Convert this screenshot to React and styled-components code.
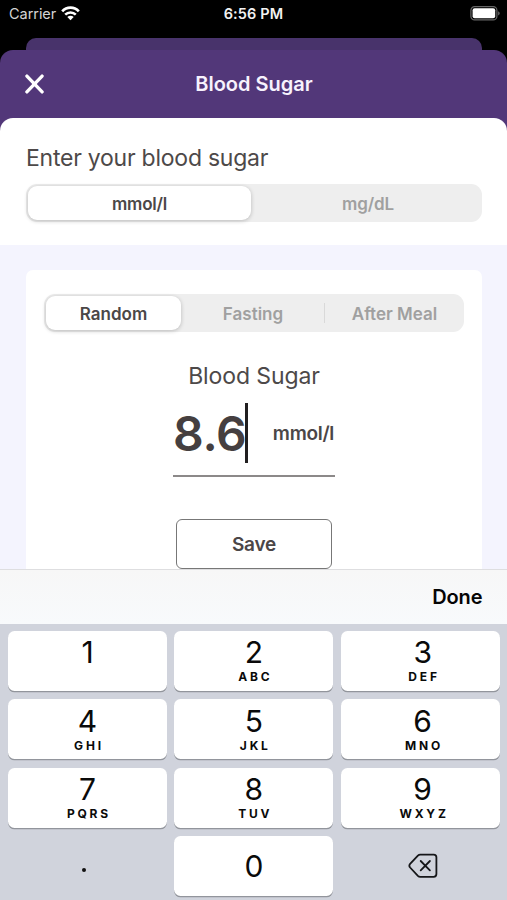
import React from 'react';
import styled, { createGlobalStyle } from 'styled-components';

const GlobalStyle = createGlobalStyle`
  * { box-sizing: border-box; }
  body { margin: 0; background: #000; font-family: Inter, "Liberation Sans", sans-serif; }
  button { font: inherit; color: inherit; border: 0; padding: 0; background: none; }
`;

const Screen = styled.div`
  width: 507px;
  height: 900px;
  overflow: hidden;
  display: flex;
  flex-direction: column;
  background: #000;
`;

const StatusBar = styled.div`
  flex: none;
  height: 38px;
  padding: 0 7px 11px 9px;
  display: grid;
  grid-template-columns: 1fr auto 1fr;
  align-items: center;
  color: #fff;
`;

const Carrier = styled.div`
  display: flex;
  align-items: center;
  gap: 5px;
  font-size: 14.5px;
  letter-spacing: -0.05px;
  color: #d4d4d4;
`;

const Clock = styled.div`
  padding-right: 2px;
  font-size: 14.5px;
  font-weight: 600;
  letter-spacing: 0.15px;
  color: #f2f2f2;
`;

const Battery = styled.svg`
  justify-self: end;
`;

const PreviousSheet = styled.div`
  flex: none;
  height: 12px;
  margin: 0 25px 0 26px;
  border-radius: 10px 10px 0 0;
  background: #48336b;
`;

const Sheet = styled.div`
  flex: none;
  height: 519px;
  overflow: hidden;
  border-radius: 13px 13px 0 0;
  background: #523779;
`;

const SheetHeader = styled.header`
  height: 68px;
  padding: 0 24px;
  display: grid;
  grid-template-columns: 40px 1fr 40px;
  align-items: center;
`;

const CloseButton = styled.button`
  display: flex;
`;

const SheetTitle = styled.h1`
  margin: 0;
  padding-left: 1px;
  text-align: center;
  font-size: 20px;
  font-weight: 600;
  color: #f7f2fd;
`;

const UnitPanel = styled.section`
  height: 127px;
  padding: 25px 25px 0 26px;
  border-radius: 13px 13px 0 0;
  background: #fff;
`;

const Prompt = styled.h2`
  margin: 0 0 11px;
  height: 30px;
  line-height: 30px;
  font-size: 23px;
  font-weight: 400;
  letter-spacing: -0.24px;
  color: #4d4949;
  white-space: nowrap;
`;

const Segments = styled.div`
  display: grid;
  grid-template-columns: ${(p) => p.$columns};
  height: 38px;
  padding: 2px;
  border-radius: 11px;
  background: #eeeeee;
`;

const Segment = styled.button`
  display: flex;
  align-items: center;
  justify-content: center;
  padding-left: ${(p) => p.$inset || '0'};
  padding-top: 1px;
  border-radius: 9px;
  font-size: 17px;
  font-weight: 600;
  letter-spacing: ${(p) => p.$tracking || '0'};
  color: ${(p) => (p.$active ? '#4b4747' : '#a0a0a0')};
  background: ${(p) => (p.$active ? '#fff' : 'transparent')};
  box-shadow: ${(p) => (p.$active ? '0 1px 4px rgba(0, 0, 0, 0.22)' : 'none')};
`;

const DividedSegment = styled(Segment)`
  border-radius: 0;
  background: linear-gradient(#d9d9d9, #d9d9d9) right center / 1px 20px no-repeat;
`;

const Content = styled.section`
  height: 324px;
  padding: 25px 25px 0 26px;
  background: #f4f4fe;
`;

const EntryCard = styled.div`
  height: 299px;
  padding: 24px 18px 0;
  border-radius: 7px 7px 0 0;
  background: #fff;
  display: flex;
  flex-direction: column;
`;

const EntryLabel = styled.h3`
  margin: 30px 0 0;
  height: 29px;
  line-height: 29px;
  text-align: center;
  font-size: 23px;
  font-weight: 400;
  letter-spacing: -0.1px;
  color: #4d4949;
`;

const ValueField = styled.div`
  align-self: center;
  width: 162px;
  height: 86px;
  border-bottom: 2px solid #8c8989;
  display: flex;
  align-items: center;
`;

const Value = styled.span`
  font-size: 48px;
  font-weight: 600;
  line-height: 60px;
  padding-top: 2px;
  letter-spacing: -0.3px;
  color: #453f40;
`;

const Caret = styled.span`
  flex: none;
  width: 3px;
  height: 60px;
  margin-left: -1px;
  background: #211f20;
`;

const ValueUnit = styled.span`
  margin-left: auto;
  padding-right: 1px;
  font-size: 19px;
  font-weight: 600;
  letter-spacing: -0.3px;
  color: #4b4647;
`;

const SaveButton = styled.button`
  align-self: center;
  flex: none;
  margin-top: 42px;
  width: 156px;
  height: 50px;
  border: 1.5px solid #777;
  border-radius: 6px;
  background: #fff;
  font-size: 19px;
  font-weight: 600;
  letter-spacing: -0.2px;
  color: #4b4647;
`;

const Toolbar = styled.div`
  flex: none;
  height: 55px;
  padding-right: 24.5px;
  border-top: 1px solid #dedee0;
  background: linear-gradient(#f7f7f7, #f8fafc);
  display: flex;
  align-items: center;
  justify-content: flex-end;
`;

const DoneButton = styled.button`
  font-size: 20px;
  font-weight: 600;
  letter-spacing: -0.1px;
  color: #050505;
`;

const Keypad = styled.div`
  flex: 1;
  display: grid;
  grid-template-columns: repeat(3, 1fr);
  grid-auto-rows: 60px;
  gap: 8.4px 7.2px;
  padding: 7px 7.3px 0 8px;
  background: #d0d3dc;
`;

const Key = styled.button`
  display: flex;
  flex-direction: column;
  align-items: center;
  justify-content: ${(p) => (p.$top ? 'flex-start' : 'center')};
  padding-top: ${(p) => (p.$top ? '2.2px' : '0')};
  border-radius: 6.5px;
  background: ${(p) => (p.$plain ? 'transparent' : '#fff')};
  box-shadow: ${(p) => (p.$plain ? 'none' : '0 1.3px 0 #92959c')};
  color: #0a0a0a;

  &:nth-child(3n) { padding-left: 5px; }
`;

const Digit = styled.span`
  font-size: 30px;
  line-height: 38px;
  font-weight: 400;
`;

const Letters = styled.span`
  font-size: 12px;
  line-height: 13px;
  margin-top: -1px;
  font-weight: 700;
  letter-spacing: 2.8px;
  margin-right: -2.8px;
`;

const DecimalPoint = styled.span`
  width: 4px;
  height: 4px;
  margin: 8px 8px 0 0;
  border-radius: 50%;
  background: #111;
`;

const KEYS = [
  ['1', ''], ['2', 'ABC'], ['3', 'DEF'],
  ['4', 'GHI'], ['5', 'JKL'], ['6', 'MNO'],
  ['7', 'PQRS'], ['8', 'TUV'], ['9', 'WXYZ'],
];

function WifiIcon() {
  return (
    <svg width="19" height="15" viewBox="0 0 19 15" fill="none">
      <path d="M1.2 5.4C5.8.4 13.2.4 17.8 5.4" stroke="#fff" strokeWidth="2.7" />
      <path d="M4.2 8.7C7.1 5.6 11.9 5.6 14.8 8.7" stroke="#fff" strokeWidth="2.5" />
      <path d="M6.3 11c1.8-1.8 4.6-1.8 6.4 0l-3.2 3.3z" fill="#fff" />
    </svg>
  );
}

function BatteryIcon() {
  return (
    <Battery width="30" height="15" viewBox="0 0 30 15">
      <rect x="0.9" y="0.7" width="26" height="13.2" rx="3.7" fill="none" stroke="#666" strokeWidth="1.2" />
      <rect x="2.6" y="2.3" width="22.6" height="10" rx="2" fill="#fff" />
      <path d="M28.1 5.2c2.2 1 2.2 3.2 0 4.2z" fill="#666" />
    </Battery>
  );
}

function BackspaceIcon() {
  return (
    <svg width="30" height="26" viewBox="0 0 30 26" fill="none" stroke="#151619" strokeWidth="1.8" strokeLinecap="round" strokeLinejoin="round">
      <path d="M12.3 1.6H25.7Q28.4 1.6 28.4 4.3V21.1Q28.4 23.8 25.7 23.8H12.3Q10.9 23.8 9.9 22.8L2.1 14.5Q.6 12.7 2.1 10.9L9.9 2.6Q10.9 1.6 12.3 1.6Z" />
      <path d="M12.7 8 21.9 17.3M21.9 8 12.7 17.3" />
    </svg>
  );
}

export default function App() {
  return (
    <Screen>
      <GlobalStyle />
      <StatusBar>
        <Carrier>Carrier <WifiIcon /></Carrier>
        <Clock>6:56 PM</Clock>
        <BatteryIcon />
      </StatusBar>
      <PreviousSheet />
      <Sheet>
        <SheetHeader>
          <CloseButton aria-label="Close">
            <svg width="21" height="20" viewBox="0 0 21 20" fill="none" stroke="#fff" strokeWidth="3.3" strokeLinecap="round">
              <path d="M2.9 2.1 18.1 17.9M18.1 2.1 2.9 17.9" />
            </svg>
          </CloseButton>
          <SheetTitle>Blood Sugar</SheetTitle>
        </SheetHeader>
        <UnitPanel>
          <Prompt>Enter your blood sugar</Prompt>
          <Segments $columns="223px 1fr">
            <Segment $active $tracking="-0.2px">mmol/l</Segment>
            <Segment $tracking="-0.1px" $inset="5px">mg/dL</Segment>
          </Segments>
        </UnitPanel>
        <Content>
          <EntryCard>
            <Segments $columns="135px 144px 1fr">
              <Segment $active>Random</Segment>
              <DividedSegment>Fasting</DividedSegment>
              <Segment $inset="2px">After Meal</Segment>
            </Segments>
            <EntryLabel>Blood Sugar</EntryLabel>
            <ValueField>
              <Value>8.6</Value>
              <Caret />
              <ValueUnit>mmol/l</ValueUnit>
            </ValueField>
            <SaveButton>Save</SaveButton>
          </EntryCard>
        </Content>
      </Sheet>
      <Toolbar>
        <DoneButton>Done</DoneButton>
      </Toolbar>
      <Keypad>
        {KEYS.map(([digit, letters]) => (
          <Key key={digit} $top>
            <Digit>{digit}</Digit>
            {letters && <Letters>{letters}</Letters>}
          </Key>
        ))}
        <Key $plain aria-label="Decimal point"><DecimalPoint /></Key>
        <Key><Digit>0</Digit></Key>
        <Key $plain aria-label="Delete"><BackspaceIcon /></Key>
      </Keypad>
    </Screen>
  );
}
